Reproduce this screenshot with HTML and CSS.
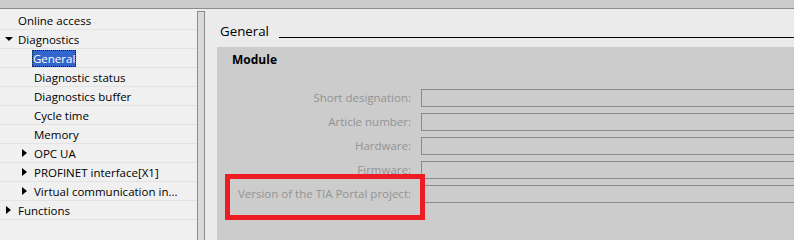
FILE: index.html
```html
<!DOCTYPE html>
<html lang="en">
<head>
    <meta charset="UTF-8">
    <title>Diagnostics - General</title>
    <link rel="stylesheet" href="styles.css">
</head>
<body>
    <div class="topbar"></div>
    <div class="main">
        <ul class="tree">
            <li class="row level-0"><span class="toggle"></span><span class="label">Online access</span></li>
            <li class="row level-0"><span class="toggle open"></span><span class="label">Diagnostics</span></li>
            <li class="row level-1"><span class="toggle"></span><span class="label selected">General</span></li>
            <li class="row level-1"><span class="toggle"></span><span class="label">Diagnostic status</span></li>
            <li class="row level-1"><span class="toggle"></span><span class="label">Diagnostics buffer</span></li>
            <li class="row level-1"><span class="toggle"></span><span class="label">Cycle time</span></li>
            <li class="row level-1"><span class="toggle"></span><span class="label">Memory</span></li>
            <li class="row level-1"><span class="toggle closed"></span><span class="label">OPC UA</span></li>
            <li class="row level-1"><span class="toggle closed"></span><span class="label">PROFINET interface[X1]</span></li>
            <li class="row level-1"><span class="toggle closed"></span><span class="label">Virtual communication in...</span></li>
            <li class="row level-0"><span class="toggle closed"></span><span class="label">Functions</span></li>
        </ul>
        <div class="scrollbar"></div>
        <div class="editor">
            <div class="section-title">
                <span class="title-text">General</span>
                <span class="title-rule"></span>
            </div>
            <div class="panel">
                <h2 class="panel-heading">Module</h2>
                <div class="form">
                    <label class="form-label">Short designation:</label>
                    <div class="field"></div>
                    <label class="form-label">Article number:</label>
                    <div class="field"></div>
                    <label class="form-label">Hardware:</label>
                    <div class="field"></div>
                    <label class="form-label">Firmware:</label>
                    <div class="field"></div>
                    <label class="form-label">Version of the TIA Portal project:</label>
                    <div class="field"></div>
                </div>
                <div class="annotation"></div>
            </div>
        </div>
    </div>
</body>
</html>
```

FILE: styles.css
```css
* {
    box-sizing: border-box;
    margin: 0;
    padding: 0;
}

body {
    width: 794px;
    height: 240px;
    overflow: hidden;
    font-family: "Open Sans", "Noto Sans", sans-serif;
    font-size: 11.5px;
    color: #000;
    background-color: #ebebeb;
}

.topbar {
    height: 9px;
    background-color: #cccccc;
    border-bottom: 1px solid #8c8c8c;
}

.main {
    display: flex;
    height: 231px;
}

/* project tree */

.tree {
    list-style: none;
    width: 197px;
    flex-shrink: 0;
    padding-top: 2px;
    background-color: #f0f0f0;
}

.row {
    display: flex;
    align-items: center;
    height: 19px;
    border-bottom: 1px solid #e3e3e3;
    white-space: nowrap;
}

.level-0 {
    padding-left: 5px;
}

.level-1 {
    padding-left: 21px;
}

.toggle {
    width: 13px;
    flex-shrink: 0;
    display: flex;
    align-items: center;
}

.toggle.open::before {
    content: '';
    border-top: 4px solid #000;
    border-left: 4px solid transparent;
    border-right: 4px solid transparent;
}

.toggle.closed::before {
    content: '';
    margin-left: 1px;
    border-left: 5px solid #000;
    border-top: 4px solid transparent;
    border-bottom: 4px solid transparent;
}

.label {
    line-height: 17px;
}

.label.selected {
    margin-left: -2px;
    padding: 0 1px;
    color: #fff;
    background-color: #3366cc;
    outline: 1px dotted #1a1a1a;
    outline-offset: -1px;
}

.scrollbar {
    width: 8px;
    flex-shrink: 0;
    margin-top: 2px;
    background-color: #dadada;
    border: 1px solid #8c8c8c;
    border-bottom: none;
}

/* editor */

.editor {
    flex: 1;
    display: flex;
    flex-direction: column;
    padding-left: 12px;
    min-width: 0;
}

.section-title {
    display: flex;
    height: 38px;
    padding-left: 3px;
}

.title-text {
    font-size: 13.3px;
    line-height: 18px;
    padding-top: 13px;
}

.title-rule {
    flex: 1;
    margin-top: 28px;
    margin-left: 10px;
    height: 0;
    border-top: 1px solid #000;
}

.panel {
    position: relative;
    flex: 1;
    padding-left: 15px;
    overflow: hidden;
    background-color: #cccccc;
}

.panel-heading {
    font-size: 12px;
    font-weight: 700;
    line-height: 16px;
    padding-top: 5px;
}

.form {
    display: grid;
    grid-template-columns: 179px 1fr;
    column-gap: 10px;
    row-gap: 6px;
    margin-top: 21px;
}

.form-label {
    text-align: right;
    line-height: 18px;
    white-space: nowrap;
    color: #939393;
}

.field {
    height: 18px;
    margin-right: -4px;
    border: 1px solid #8a8a8a;
}

.annotation {
    position: absolute;
    left: 8px;
    top: 127px;
    width: 200px;
    height: 46px;
    border: 5px solid #ed1c24;
}
```
